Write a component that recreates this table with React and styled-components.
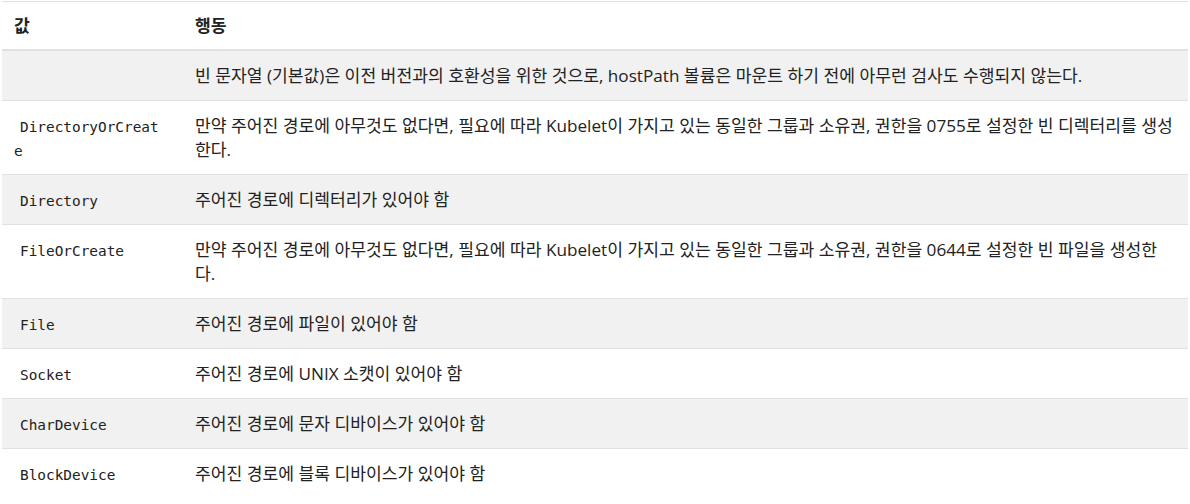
import React from "react";
import styled, { createGlobalStyle } from "styled-components";

const Global = createGlobalStyle`
  html, body { margin: 0; padding: 0; background: #fff; }
  body {
    font-family: "Open Sans", "Noto Sans CJK KR", sans-serif;
    color: #222;
    font-size: 17px;
  }
`;

const Wrap = styled.div`
  padding: 1px 2px 0 2px;
`;

const Table = styled.table`
  width: 1186px;
  border-collapse: collapse;
  table-layout: fixed;
  border-top: 1px solid #dee2e6;
  font-family: "Open Sans", "Noto Sans CJK KR", sans-serif;
  font-size: 17.15px;
  color: #222;
`;

const HeadCell = styled.th`
  text-align: left;
  font-weight: 700;
  font-size: 17.15px;
  padding: 12px 12px 11px 12px;
  line-height: 24px;
  vertical-align: bottom;
  border-bottom: 2px solid #dee2e6;
  width: ${(p) => p.$w || "auto"};
`;

const Row = styled.tr`
  background: ${(p) => (p.$striped ? "#f1f1f1" : "#fff")};
`;

const Cell = styled.td`
  padding: 13px ${(p) => (p.$last ? "14px" : "12px")} 12px 12px;
  font-size: 17.15px;
  line-height: 24px;
  vertical-align: top;
  border-top: 1px solid #dee2e6;
`;

const Code = styled.code`
  font-family: "DejaVu Sans Mono", "Liberation Mono", monospace;
  font-size: 14.4px;
  line-height: 1;
  padding: 0 6px;
  word-break: break-all;
  color: #222;
`;

const rows = [
  ["", "빈 문자열 (기본값)은 이전 버전과의 호환성을 위한 것으로, hostPath 볼륨은 마운트 하기 전에 아무런 검사도 수행되지 않는다."],
  ["DirectoryOrCreate", "만약 주어진 경로에 아무것도 없다면, 필요에 따라 Kubelet이 가지고 있는 동일한 그룹과 소유권, 권한을 0755로 설정한 빈 디렉터리를 생성한다."],
  ["Directory", "주어진 경로에 디렉터리가 있어야 함"],
  ["FileOrCreate", "만약 주어진 경로에 아무것도 없다면, 필요에 따라 Kubelet이 가지고 있는 동일한 그룹과 소유권, 권한을 0644로 설정한 빈 파일을 생성한다."],
  ["File", "주어진 경로에 파일이 있어야 함"],
  ["Socket", "주어진 경로에 UNIX 소캣이 있어야 함"],
  ["CharDevice", "주어진 경로에 문자 디바이스가 있어야 함"],
  ["BlockDevice", "주어진 경로에 블록 디바이스가 있어야 함"],
];

export default function App() {
  return (
    <Wrap>
      <Global />
      <Table>
        <thead>
          <tr>
            <HeadCell $w="157px">값</HeadCell>
            <HeadCell>행동</HeadCell>
          </tr>
        </thead>
        <tbody>
          {rows.map(([code, text], i) => (
            <Row key={i} $striped={i % 2 === 0}>
              <Cell>{code && <Code>{code}</Code>}</Cell>
              <Cell $last>{text}</Cell>
            </Row>
          ))}
        </tbody>
      </Table>
    </Wrap>
  );
}
